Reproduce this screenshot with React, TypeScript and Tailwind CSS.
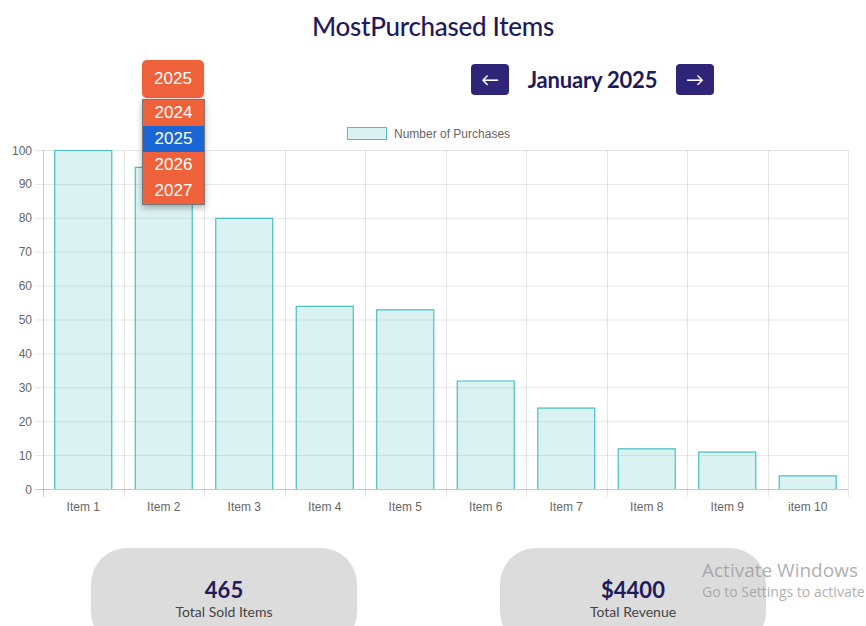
import React from "react";

// chart geometry (svg coords, svg top sits at page y=120)
const LEFT = 43;
const RIGHT = 848;
const ZERO_Y = 369;
const PX_PER_UNIT = 3.39;
const ITEMS = [
  { label: "Item 1", value: 100 },
  { label: "Item 2", value: 95 },
  { label: "Item 3", value: 80 },
  { label: "Item 4", value: 54 },
  { label: "Item 5", value: 53 },
  { label: "Item 6", value: 32 },
  { label: "Item 7", value: 24 },
  { label: "Item 8", value: 12 },
  { label: "Item 9", value: 11 },
  { label: "item 10", value: 4 },
];
const TICKS = [0, 10, 20, 30, 40, 50, 60, 70, 80, 90, 100];
const YEARS = [2024, 2025, 2026, 2027];

function PurchasesChart() {
  const catW = (RIGHT - LEFT) / ITEMS.length;
  const barW = catW * 0.72;
  const yOf = (v: number) => ZERO_Y - v * PX_PER_UNIT;

  return (
    <svg width={866} height={400} className="block" style={{ fontFamily: '"Liberation Sans", Arial, sans-serif' }}>
      {/* Legend */}
      <rect x={347.5} y={7.5} width={39} height={12} fill="rgba(75,192,192,0.2)" stroke="rgb(75,192,192)" strokeWidth={1} />
      <text x={394} y={17.5} fontSize={12} fill="#666">Number of Purchases</text>

      {/* horizontal grid + y labels */}
      {TICKS.map((t) => (
        <g key={t}>
          <line x1={35} x2={RIGHT} y1={yOf(t) + 0.5} y2={yOf(t) + 0.5} stroke={t === 0 ? "rgba(0,0,0,0.22)" : "rgba(0,0,0,0.1)"} />
          <text x={32} y={yOf(t) + 4.5} fontSize={12} fill="#666" textAnchor="end">{t}</text>
        </g>
      ))}

      {/* vertical grid */}
      {Array.from({ length: ITEMS.length + 1 }).map((_, i) => {
        const x = Math.round(LEFT + catW * i) + 0.5;
        return (
          <line key={i} x1={x} x2={x} y1={yOf(100)} y2={ZERO_Y + 8} stroke={i === 0 ? "rgba(0,0,0,0.2)" : "rgba(0,0,0,0.1)"} />
        );
      })}

      {/* bars */}
      {ITEMS.map((it, i) => {
        const cx = LEFT + catW * (i + 0.5);
        const top = yOf(it.value);
        return (
          <g key={it.label}>
            <rect x={cx - barW / 2} y={top} width={barW} height={ZERO_Y - top} fill="rgba(75,192,192,0.2)" />
            <path
              d={`M${cx - barW / 2 + 0.5} ${ZERO_Y} V${top + 0.5} H${cx + barW / 2 - 0.5} V${ZERO_Y}`}
              fill="none"
              stroke="rgb(75,192,192)"
              strokeWidth={1.2}
            />
            <text x={cx} y={391} fontSize={12} fill="#666" textAnchor="middle">{it.label}</text>
          </g>
        );
      })}
    </svg>
  );
}

function StatCard({ value, label, className }: { value: string; label: string; className?: string }) {
  return (
    <div className={`w-[266px] h-[100px] rounded-[36px] bg-[#dcdcdc] pt-[29px] text-center ${className ?? ""}`}>
      <div className="text-[22px] leading-[26px] font-bold text-[#1f1a5c]">{value}</div>
      <div className="text-[14px] leading-[18px] text-[#444]">{label}</div>
    </div>
  );
}

export default function App() {
  return (
    <div className="relative w-[866px] h-[626px] overflow-hidden bg-white" style={{ fontFamily: 'Lato, "Open Sans", sans-serif' }}>
      <h1 className="pt-[10px] text-center text-[26px] leading-[32px] font-medium tracking-[-0.3px] text-[#1f1a5c]">
        MostPurchased Items
      </h1>

      {/* Controls */}
      <div className="mt-[18px] flex h-[38px] items-center">
        <div className="relative ml-[142px]">
          <button
            className="h-[38px] w-[62px] rounded-[5px] bg-[#ef613b] text-[17px] text-white shadow-[0_1px_3px_rgba(0,0,0,0.15)]"
            style={{ fontFamily: '"Liberation Sans", Arial, sans-serif' }}
          >
            2025
          </button>
          {/* open year list */}
          <div
            className="absolute left-0 top-[39px] z-10 w-[63px] border border-[#767676] bg-[#ef613b] shadow-[0_3px_6px_rgba(0,0,0,0.3)]"
            style={{ fontFamily: '"Liberation Sans", Arial, sans-serif' }}
          >
            {YEARS.map((y) => (
              <div
                key={y}
                className={`h-[26px] text-center text-[17px] leading-[26px] text-white ${y === 2025 ? "bg-[#1966d4]" : ""}`}
              >
                {y}
              </div>
            ))}
          </div>
        </div>

        <button className="ml-[267px] flex h-[31px] w-[38px] items-center justify-center rounded-[4px] bg-[#2e2579] text-[18px] text-white">
          ←
        </button>
        <div className="w-[167px] text-center text-[22px] font-bold tracking-[-0.2px] text-[#1f1a5c]">January 2025</div>
        <button className="flex h-[31px] w-[38px] items-center justify-center rounded-[4px] bg-[#2e2579] text-[18px] text-white">
          →
        </button>
      </div>

      <div className="mt-[22px]">
        <PurchasesChart />
      </div>

      <div className="mt-[28px] flex">
        <StatCard value="465" label="Total Sold Items" className="ml-[91px]" />
        <StatCard value="$4400" label="Total Revenue" className="ml-[143px]" />
      </div>

      {/* Windows watermark */}
      <div className="pointer-events-none absolute left-[702px] top-[557px] whitespace-nowrap text-[#9a9a9a]/80" style={{ fontFamily: '"Open Sans", "Noto Sans", sans-serif' }}>
        <div className="text-[19px] leading-[26px]">Activate Windows</div>
        <div className="text-[14px] leading-[18px]">Go to Settings to activate Windows.</div>
      </div>
    </div>
  );
}
